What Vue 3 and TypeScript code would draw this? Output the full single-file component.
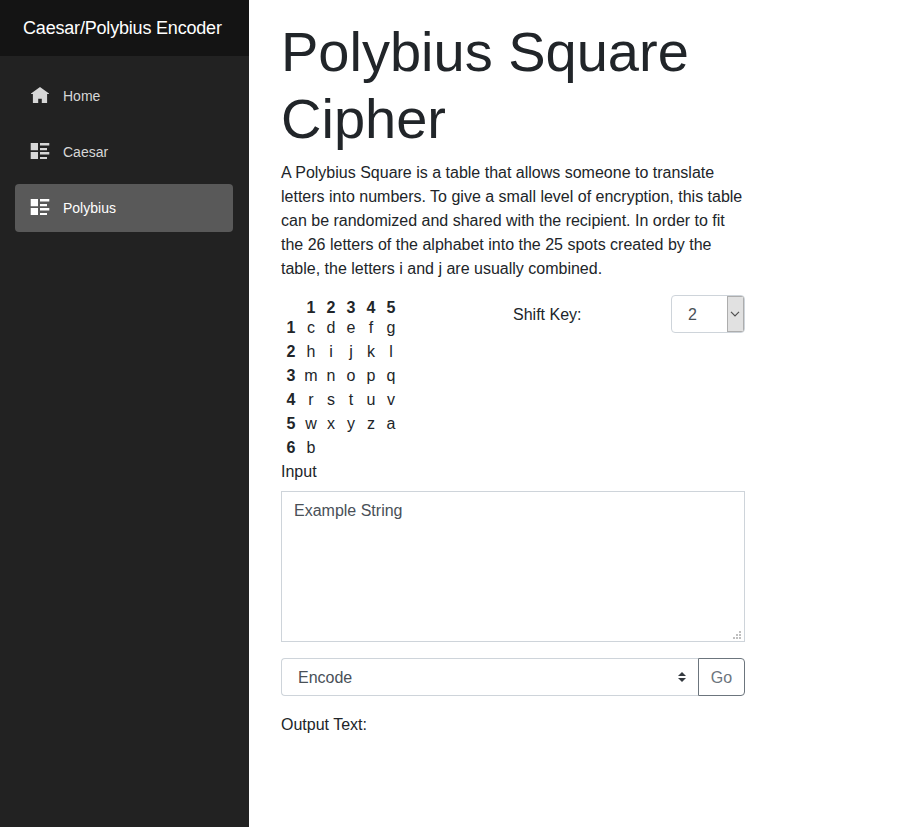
<script setup lang="ts">
import { computed, ref } from 'vue'

const navItems = [
  { label: 'Home', icon: 'home' },
  { label: 'Caesar', icon: 'list' },
  { label: 'Polybius', icon: 'list' },
]
const active = ref('Polybius')
const shift = ref(2)
const input = ref('Example String')

const rows = computed(() => {
  const letters = Array.from({ length: 26 }, (_, i) =>
    String.fromCharCode(97 + ((i + shift.value) % 26)),
  )
  return Array.from({ length: 6 }, (_, r) => letters.slice(r * 5, r * 5 + 5))
})
</script>

<template>
  <div class="page">
    <aside class="sidebar">
      <header class="brand">Caesar/Polybius Encoder</header>
      <nav class="nav">
        <a
          v-for="item in navItems"
          :key="item.label"
          class="nav-link"
          :class="{ active: item.label === active }"
          @click="active = item.label"
        >
          <svg v-if="item.icon === 'home'" class="icon" viewBox="0 0 20 20">
            <path d="M10 1 1 7.500V8h1.900v9h5.300v-4.300h3.600V17h5.300V8H19v-.5z" />
          </svg>
          <svg v-else class="icon" viewBox="0 0 20 20">
            <path d="M.7 1H8v7.200H.7zM.7 10H8v7H.7zM10 1h9.300v2.600H10zM10 6h7v2.200h-7zM10 10h9.300v2.600H10zM10 15h7v2h-7z" />
          </svg>
          <span>{{ item.label }}</span>
        </a>
      </nav>
    </aside>

    <main class="content">
      <h1>Polybius Square Cipher</h1>
      <p class="intro">
        A Polybius Square is a table that allows someone to translate letters into numbers. To
        give a small level of encryption, this table can be randomized and shared with the
        recipient. In order to fit the 26 letters of the alphabet into the 25 spots created by the
        table, the letters i and j are usually combined.
      </p>
      <div class="settings">
        <div class="square">
          <div class="square-row head">
            <b></b>
            <b v-for="n in 5" :key="n">{{ n }}</b>
          </div>
          <div v-for="(row, r) in rows" :key="r" class="square-row">
            <b>{{ r + 1 }}</b>
            <span v-for="letter in row" :key="letter">{{ letter }}</span>
          </div>
        </div>
        <div class="shift">
          <span class="shift-label">Shift Key:</span>
          <div class="shift-select">
            <span class="shift-value">{{ shift }}</span>
            <span class="shift-button">
              <svg viewBox="0 0 10 6"><path d="M1 .8 5 4.800 9 .8" /></svg>
            </span>
          </div>
        </div>
      </div>
      <label class="input-label" for="source">Input</label>
      <div class="textarea-wrap">
        <textarea id="source" v-model="input" spellcheck="false"></textarea>
        <svg class="grip" viewBox="0 0 8 8">
          <path d="M6 0h2v2H6zM3 3h2v2H3zM6 3h2v2H6zM0 6h2v2H0zM3 6h2v2H3zM6 6h2v2H6z" />
        </svg>
      </div>
      <div class="action">
        <div class="mode">
          <span>Encode</span>
          <svg viewBox="0 0 8 10"><path d="M0 4 4 0l4 4zM0 6h8l-4 4z" /></svg>
        </div>
        <button class="go" type="button">Go</button>
      </div>
      <div class="output">Output Text:</div>
    </main>
  </div>
</template>

<style>
body {
  margin: 0;
  background: #fff;
}
</style>

<style scoped>
.page,
.page * {
  box-sizing: border-box;
}
.page {
  display: flex;
  height: 827px;
  overflow: hidden;
  font: 16px/24px 'Liberation Sans', Arial, sans-serif;
  color: #212529;
}
.sidebar {
  flex: none;
  width: 249px;
  background: #222;
}
.brand {
  height: 56px;
  padding-left: 23px;
  background: #141414;
  color: #fff;
  font-size: 18px;
  letter-spacing: -0.19px;
  line-height: 56px;
  white-space: nowrap;
}
.nav {
  display: flex;
  flex-direction: column;
  gap: 8px;
  padding: 16px 16px 0 15px;
}
.nav-link {
  display: flex;
  align-items: center;
  height: 48px;
  padding-left: 15px;
  border-radius: 4px;
  color: #d7d7d7;
  font-size: 14px;
  cursor: pointer;
}
.nav-link.active {
  background: #595959;
  color: #fff;
}
.icon {
  width: 20px;
  height: 20px;
  margin-right: 13px;
  fill: currentColor;
}
.content {
  width: 464px;
  margin-left: 32px;
  padding-top: 17.6px;
}
h1 {
  margin: 0 0 9px;
  font-size: 56px;
  font-weight: 300;
  line-height: 67.2px;
}
.intro {
  margin: 0 0 15px;
}
.settings {
  display: flex;
}
.square {
  width: 232px;
}
.square-row {
  display: flex;
  height: 24px;
}
.square-row.head {
  height: 20px;
}
.square-row > * {
  width: 20px;
  text-align: center;
}
.shift {
  display: flex;
  flex: 1;
  justify-content: space-between;
  align-items: flex-start;
}
.shift-label {
  padding-top: 7px;
}
.shift-select {
  display: flex;
  width: 74px;
  height: 38px;
  margin-top: -1px;
  border: 1px solid #ced4da;
  border-radius: 4px;
  color: #495057;
  overflow: hidden;
}
.shift-value {
  flex: 1;
  padding: 1px 0 0 16px;
  line-height: 36px;
}
.shift-button {
  display: flex;
  align-items: center;
  justify-content: center;
  width: 17px;
  padding-right: 1px;
  border: 1px solid #adadad;
  background: #e1e1e1;
}
.shift-button svg {
  width: 10px;
  height: 6px;
  fill: none;
  stroke: #505050;
  stroke-width: 1.2;
}
.input-label {
  display: block;
  margin-bottom: 7px;
}
.textarea-wrap {
  position: relative;
  height: 151px;
}
textarea {
  display: block;
  width: 100%;
  height: 100%;
  padding: 7px 12px 5px;
  border: 1px solid #ced4da;
  border-radius: 0;
  outline: none;
  resize: none;
  background: #fff;
  color: #495057;
  font: inherit;
}
.grip {
  position: absolute;
  right: 4px;
  bottom: 3px;
  width: 8px;
  height: 8px;
  fill: #bfbfbf;
}
.action {
  display: flex;
  height: 38px;
  margin: 16px 0 17px;
}
.mode {
  display: flex;
  flex: 1;
  align-items: center;
  justify-content: space-between;
  padding: 0 12px 0 16px;
  border: 1px solid #ced4da;
  border-right: 0;
  border-radius: 4px 0 0 4px;
  color: #495057;
}
.mode span {
  padding-top: 2px;
}
.mode svg {
  width: 8px;
  height: 10px;
  fill: #343a40;
}
.go {
  width: 47px;
  padding: 2px 0 0;
  border: 1px solid #6c757d;
  border-radius: 0 4px 4px 0;
  background: #fff;
  color: #6c757d;
  font: inherit;
}
</style>
